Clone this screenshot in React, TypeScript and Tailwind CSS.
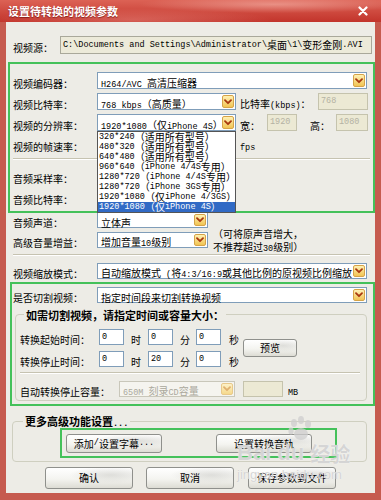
import React from "react";

// CJK runs render in the CJK face at 10px, latin runs in a narrow mono (SimSun-like metrics)
const CJK_RUN = /([\u2E80-\u9FFF\u3000-\u303F\uFF00-\uFFEF]+)/;

function Txt({ s, big }: { s: string; big?: boolean }) {
  const parts = s.split(CJK_RUN).filter(Boolean);
  return (
    <>
      {parts.map((p, i) =>
        CJK_RUN.test(p) ? (
          <span key={i} className={big ? "text-[11px]" : "text-[10px]"}>
            {p}
          </span>
        ) : (
          <span key={i} className="font-['Liberation_Mono',monospace] text-[8.5px] whitespace-pre">
            {p}
          </span>
        )
      )}
    </>
  );
}

function Label({ text, className = "" }: { text: string; className?: string }) {
  return (
    <div className={`shrink-0 whitespace-nowrap ${className}`}>
      <Txt s={text} />
    </div>
  );
}

function DropBtn({ disabled }: { disabled?: boolean }) {
  return (
    <div
      className={`shrink-0 w-[12px] h-[calc(100%-2px)] mr-[1px] rounded-[2px] border flex items-center justify-center ${
        disabled
          ? "border-[#e8c98a] bg-[linear-gradient(180deg,#fdf1c8,#f5d98c)]"
          : "border-[#d6a448] bg-[linear-gradient(180deg,#fff1b4,#f1c453)]"
      }`}
    >
      <svg width="8" height="6" viewBox="0 0 8 6">
        <path
          d="M1 1.2 L4 4.2 L7 1.2"
          fill="none"
          stroke={disabled ? "#e0b070" : "#a8380f"}
          strokeWidth="1.8"
          strokeLinecap="round"
          strokeLinejoin="round"
        />
      </svg>
    </div>
  );
}

function Select({ value, className = "", disabled }: { value: string; className?: string; disabled?: boolean }) {
  return (
    <div
      className={`shrink-0 h-full flex items-center border ${
        disabled ? "border-[#c9c7ba] bg-[#f5f4ef] text-[#aaa89c]" : "border-[#7f9db9] bg-white text-black"
      } ${className}`}
    >
      <div className="flex-1 min-w-0 overflow-hidden whitespace-nowrap pl-[3px]">
        <Txt s={value} />
      </div>
      <DropBtn disabled={disabled} />
    </div>
  );
}

function Field({ value = "", className = "", tone = "white" }: { value?: string; className?: string; tone?: "white" | "beige" | "disabled" }) {
  const look =
    tone === "white"
      ? "border-[#7f9db9] bg-white text-black"
      : tone === "beige"
      ? "border-[#a9a89a] bg-[#ecead9] text-black"
      : "border-[#c5c3ad] bg-[#ece9d4] text-[#b4b2a3]";
  return (
    <div className={`shrink-0 h-full flex items-center border pl-[2px] overflow-hidden whitespace-nowrap ${look} ${className}`}>
      <Txt s={value} />
    </div>
  );
}

function Btn({ label, className = "" }: { label: string; className?: string }) {
  return (
    <div
      className={`shrink-0 flex items-center justify-center rounded-[3px] border border-[#8f908c] bg-[radial-gradient(ellipse_at_75%_35%,rgba(190,190,185,0.45),transparent_45%),linear-gradient(180deg,#ffffff_0%,#f4f4f0_55%,#dddcd4_100%)] ${className}`}
    >
      <Txt s={label} />
    </div>
  );
}

function Sep({ className = "" }: { className?: string }) {
  return <div className={`h-[2px] border-t border-b border-t-[#c6c3b1] border-b-white ${className}`} />;
}

const RESOLUTIONS = [
  "320*240（适用所有型号）",
  "480*320（适用所有型号）",
  "640*480（适用所有型号）",
  "960*640（iPhone 4/4S专用）",
  "1280*720（iPhone 4/4S专用）",
  "1280*720（iPhone 3GS专用）",
  "1920*1080（仅iPhone 4/3GS）",
  "1920*1080（仅iPhone 4S）",
];

function TimeRow({ label, h, m, s }: { label: string; h: string; m: string; s: string }) {
  return (
    <div className="h-[16px] flex items-center">
      <Label text={label} className="w-[79px]" />
      <Field value={h} className="w-[25px]" />
      <Label text="时" className="ml-[7px] w-[17px]" />
      <Field value={m} className="w-[25px]" />
      <Label text="分" className="ml-[7px] w-[16px]" />
      <Field value={s} className="w-[25px]" />
      <Label text="秒" className="ml-[8px] w-[14px]" />
    </div>
  );
}

export default function App() {
  return (
    <div className="w-[381px] h-[500px] overflow-hidden bg-[#c65b4f] flex flex-col font-['Noto_Sans_CJK_SC',sans-serif] text-black leading-none">
      {/* title bar */}
      <div className="h-[22px] shrink-0 flex items-center justify-between pl-[8px] pr-[13px] bg-[radial-gradient(ellipse_at_72%_20%,rgba(255,210,200,0.45),transparent_35%),radial-gradient(ellipse_at_35%_90%,rgba(255,190,180,0.3),transparent_40%),linear-gradient(180deg,#dc6255,#c2342b)]">
        <span className="text-white font-bold text-[11px] [text-shadow:0_1px_1px_rgba(90,0,0,0.6)]">设置待转换的视频参数</span>
        <svg width="10" height="10" viewBox="0 0 10 10">
          <path d="M1.5 1.5 L8.5 8.5 M8.5 1.5 L1.5 8.5" stroke="white" strokeWidth="2.2" strokeLinecap="round" />
        </svg>
      </div>

      {/* dialog body */}
      <div className="relative ml-[6px] w-[369px] h-[471px] shrink-0 bg-[#edece6] flex flex-col">
        {/* source */}
        <div className="mt-[14px] h-[18px] flex items-center pl-[7px]">
          <Label text="视频源：" className="w-[47px]" />
          <Field tone="beige" value="C:\Documents and Settings\Administrator\桌面\1\变形金刚.AVI" className="w-[312px]" />
        </div>

        {/* video settings */}
        <div className="mt-[8px] ml-[2px] w-[367px] border-2 border-[#44c15a] pt-[8px] pb-[6px] pl-[3px] flex flex-col">
          <div className="flex flex-col gap-[4px]">
            <div className="h-[17px] flex items-center">
              <Label text="视频编码器：" className="w-[84px]" />
              <Select value="H264/AVC 高清压缩器" className="w-[270px]" />
            </div>
            <div className="h-[17px] flex items-center">
              <Label text="视频比特率：" className="w-[84px]" />
              <Select value="768 kbps（高质量）" className="w-[139px]" />
              <Label text="比特率(kbps)：" className="ml-[4px] w-[78px]" />
              <Field tone="disabled" value="768" className="w-[50px]" />
            </div>
            <div className="h-[17px] flex items-center">
              <Label text="视频的分辨率：" className="w-[84px]" />
              <div className="relative w-[139px] h-full shrink-0">
                <Select value="1920*1080（仅iPhone 4S）" className="w-[139px]" />
                {/* open dropdown list */}
                <div className="absolute top-full left-0 z-10 w-[139px] border border-[#555] bg-white flex flex-col">
                  {RESOLUTIONS.map((r, i) => (
                    <div
                      key={r}
                      className={`h-[10px] flex items-center pl-[1px] whitespace-nowrap overflow-hidden ${
                        i === RESOLUTIONS.length - 1 ? "bg-[#316ac5] text-white" : "text-black"
                      }`}
                    >
                      <Txt s={r} />
                    </div>
                  ))}
                </div>
              </div>
              <Label text="宽：" className="ml-[4px] w-[27px]" />
              <Field tone="disabled" value="1920" className="w-[30px]" />
              <Label text="高：" className="ml-[13px] w-[26px]" />
              <Field tone="disabled" value="1080" className="w-[32px]" />
            </div>
            <div className="h-[17px] flex items-center">
              <Label text="视频的帧速率：" className="w-[84px]" />
              <div className="w-[143px] shrink-0" />
              <Label text="fps" />
            </div>
          </div>
          <Sep className="mt-[6px] mr-[3px]" />
          <div className="mt-[7px] h-[17px] flex items-center">
            <Label text="音频采样率：" className="w-[84px]" />
          </div>
          <div className="mt-[4px] h-[17px] flex items-center">
            <Label text="音频比特率：" className="w-[84px]" />
          </div>
        </div>

        {/* audio */}
        <div className="-mt-[1px] h-[16px] flex items-center pl-[7px]">
          <Label text="音频声道：" className="w-[84px]" />
          <Select value="立体声" className="w-[111px]" />
        </div>
        <div className="mt-[4px] h-[16px] flex items-center pl-[7px]">
          <Label text="高级音量增益：" className="w-[84px]" />
          <Select value="增加音量10级别" className="w-[111px]" />
          <div className="ml-[5px] flex flex-col leading-[10px] whitespace-nowrap">
            <div>
              <Txt s="（可将原声音增大，" />
            </div>
            <div>
              <Txt s="不推荐超过30级别）" />
            </div>
          </div>
        </div>

        <Sep className="mt-[6px] ml-[7px] mr-[5px]" />

        <div className="mt-[7px] h-[16px] flex items-center pl-[7px]">
          <Label text="视频缩放模式：" className="w-[84px]" />
          <Select value="自动缩放模式 (将4:3/16:9或其他比例的原视频比例缩放" className="w-[270px]" />
        </div>

        {/* cut settings */}
        <div className="mt-[3px] ml-[4px] w-[365px] border-2 border-[#44c15a] pt-[3px] pb-[3px] flex flex-col">
          <div className="h-[16px] flex items-center pl-[1px]">
            <Label text="是否切割视频：" className="w-[84px]" />
            <Select value="指定时间段来切割转换视频" className="w-[270px]" />
          </div>
          <fieldset className="mt-[4px] ml-[3px] w-[352px] min-w-0 border border-[#cfcfc0] rounded-[4px] pb-[3px]">
            <legend className="ml-[8px] px-[2px] font-bold leading-[12px]">
              <Txt s="如需切割视频，请指定时间或容量大小：" big />
            </legend>
            <div className="pt-[8px] pl-[4px] flex items-center">
              <div className="flex flex-col gap-[6px]">
                <TimeRow label="转换起始时间：" h="0" m="0" s="0" />
                <TimeRow label="转换停止时间：" h="0" m="20" s="0" />
              </div>
              <Btn label="预览" className="w-[54px] h-[18px]" />
            </div>
            <Sep className="mt-[5px] ml-[4px] w-[340px]" />
            <div className="mt-[7px] h-[16px] flex items-center pl-[4px]">
              <Label text="自动转换停止容量：" className="w-[99px]" />
              <Select disabled value="650M 刻录CD容量" className="w-[116px]" />
              <Field tone="disabled" className="ml-[8px] w-[40px]" />
              <Label text="MB" className="ml-[5px]" />
            </div>
          </fieldset>
        </div>

        {/* advanced */}
        <fieldset className="mt-[7px] ml-[6px] w-[355px] min-w-0 border border-[#cfcfc0] rounded-[4px] pb-[3px]">
          <legend className="ml-[10px] px-[2px] font-bold leading-[12px]">
            <Txt s="更多高级功能设置..." big />
          </legend>
          <div className="-mt-[2px] ml-[47px] w-[277px] border-2 border-[#44c15a] pt-[4px] pb-[3px] pl-[4px] flex gap-[54px]">
            <Btn label="添加/设置字幕..." className="w-[96px] h-[19px]" />
            <Btn label="设置转换音轨" className="w-[96px] h-[19px]" />
          </div>
        </fieldset>

        {/* dialog buttons */}
        <div className="mt-[5px] ml-[39px] flex">
          <Btn label="确认" className="w-[88px] h-[22px]" />
          <Btn label="取消" className="ml-[13px] w-[88px] h-[22px]" />
          <Btn label="保存参数到文件" className="ml-[14px] w-[88px] h-[22px]" />
        </div>

        {/* watermark */}
        <div className="absolute left-[231px] top-[394px] z-20 pointer-events-none select-none flex flex-col text-[rgba(200,200,200,0.75)] [text-shadow:0_0_1px_#fff]">
          <svg className="ml-[50px]" width="26" height="26" viewBox="0 0 26 26">
            <g fill="rgba(205,205,205,0.75)">
              <ellipse cx="7" cy="7" rx="3" ry="4" />
              <ellipse cx="14" cy="4" rx="3" ry="4" />
              <ellipse cx="21" cy="8" rx="3" ry="4" />
              <ellipse cx="4" cy="15" rx="2.6" ry="3.4" />
              <ellipse cx="14" cy="18" rx="7" ry="6" />
            </g>
          </svg>
          <div className="flex items-end font-['Liberation_Sans',sans-serif] font-bold text-[22px] leading-none">
            <span>Bai</span>
            <span className="ml-[6px]">du</span>
            <span className="ml-[6px] font-['Noto_Sans_CJK_SC',sans-serif] text-[20px]">经验</span>
          </div>
          <div className="mt-[4px] font-['Liberation_Sans',sans-serif] text-[13px] leading-none">jingyan.baidu.com</div>
        </div>
      </div>
    </div>
  );
}
